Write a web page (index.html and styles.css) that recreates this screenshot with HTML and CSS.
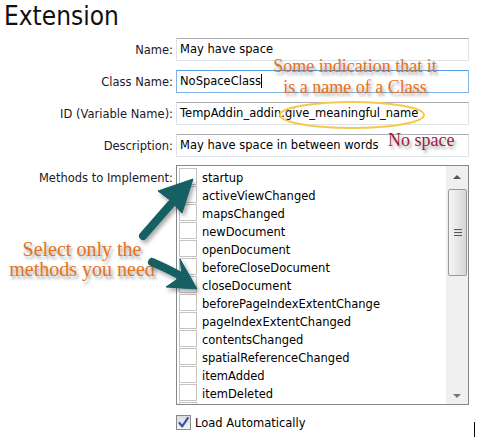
FILE: index.html
```html
<!DOCTYPE html>
<html lang="en">
<head>
<meta charset="utf-8">
<title>Extension</title>
<link rel="stylesheet" href="styles.css">
</head>
<body>
<div class="page">
  <h1 class="title">Extension</h1>

  <div class="form">
    <label class="label">Name:</label>
    <div class="field">May have space</div>

    <label class="label">Class Name:</label>
    <div class="field focused">NoSpaceClass<span class="caret"></span></div>

    <label class="label">ID (Variable Name):</label>
    <div class="field">TempAddin_addin.give_meaningful_name</div>

    <label class="label">Description:</label>
    <div class="field">May have space in between words</div>

    <label class="label top">Methods to Implement:</label>
    <div class="listbox">
      <ul class="methods">
        <li><span class="box"></span><span class="name">startup</span></li>
        <li><span class="box"></span><span class="name">activeViewChanged</span></li>
        <li><span class="box"></span><span class="name">mapsChanged</span></li>
        <li><span class="box"></span><span class="name">newDocument</span></li>
        <li><span class="box"></span><span class="name">openDocument</span></li>
        <li><span class="box"></span><span class="name">beforeCloseDocument</span></li>
        <li><span class="box"></span><span class="name">closeDocument</span></li>
        <li><span class="box"></span><span class="name">beforePageIndexExtentChange</span></li>
        <li><span class="box"></span><span class="name">pageIndexExtentChanged</span></li>
        <li><span class="box"></span><span class="name">contentsChanged</span></li>
        <li><span class="box"></span><span class="name">spatialReferenceChanged</span></li>
        <li><span class="box"></span><span class="name">itemAdded</span></li>
        <li><span class="box"></span><span class="name">itemDeleted</span></li>
        <li><span class="box"></span></li>
      </ul>
      <div class="scrollbar">
        <div class="arrow up"></div>
        <div class="track">
          <div class="thumb"><span class="grip"></span></div>
        </div>
        <div class="arrow down"></div>
      </div>
    </div>

    <span></span>
    <div class="auto">
      <span class="check">
        <svg width="11" height="11" viewBox="0 0 11 11"><path d="M1.5 6 L4.2 9.3 L9.8 1.2" fill="none" stroke="#3553a8" stroke-width="2.2" stroke-linejoin="round" stroke-linecap="round"/></svg>
      </span>
      Load Automatically
    </div>
  </div>

  <!-- callouts drawn over the form -->
  <div class="note class-note">Some indication that it<br>is a name of a Class</div>
  <div class="note space-note">No space</div>
  <div class="note select-note">Select only the<br>methods you need</div>

  <svg class="marks" width="494" height="437" viewBox="0 0 494 437">
    <defs>
      <filter id="shade" x="-30%" y="-30%" width="160%" height="160%">
        <feDropShadow dx="2" dy="3" stdDeviation="2" flood-color="#000" flood-opacity="0.35"/>
      </filter>
    </defs>
    <ellipse cx="352" cy="115" rx="72" ry="13" fill="none" stroke="#f6c94a" stroke-width="2"/>
    <g fill="#155e63" stroke="#155e63" filter="url(#shade)">
      <path d="M143 236 L171 204" stroke-width="8" stroke-linecap="round" fill="none"/>
      <path d="M193 179 L158 191 L170 200 L182 213 Z" stroke-width="1" stroke-linejoin="round"/>
      <path d="M152 262 Q166 268 181 276" stroke-width="8" stroke-linecap="round" fill="none"/>
      <path d="M197 289 L180 259 L182 276 L166 287 Z" stroke-width="1" stroke-linejoin="round"/>
    </g>
    <line x1="474.5" y1="422" x2="474.5" y2="437" stroke="#000" stroke-width="1"/>
  </svg>
</div>
</body>
</html>
```
FILE: styles.css
```css
html, body {
  margin: 0;
  padding: 0;
  background: #fff;
}

.page {
  position: relative;
  width: 494px;
  height: 437px;
  overflow: hidden;
  font-family: "DejaVu Sans", Tahoma, sans-serif;
  font-size: 11.5px;
  color: #000;
}

.title {
  margin: 0;
  padding: 0 0 0 4px;
  height: 38px;
  box-sizing: border-box;
  font-family: "DejaVu Sans Condensed", "DejaVu Sans", sans-serif;
  font-weight: normal;
  font-size: 26px;
  line-height: 32px;
  color: #111;
}

.form {
  display: grid;
  grid-template-columns: 173px 293px;
  column-gap: 3px;
  row-gap: 9px;
  align-items: center;
}

.label {
  text-align: right;
  white-space: nowrap;
  color: #1a1a28;
}

.label.top {
  align-self: start;
  padding-top: 5px;
}

.field {
  height: 23px;
  box-sizing: border-box;
  border: 1px solid #dde3ea;
  border-top-color: #abadb3;
  padding: 0 3px;
  line-height: 21px;
  white-space: nowrap;
  overflow: hidden;
}

.field.focused {
  border-color: #7eb4ea;
  border-top-color: #569de5;
}

.caret {
  display: inline-block;
  width: 1px;
  height: 14px;
  background: #000;
  vertical-align: -3px;
}

.listbox {
  display: flex;
  height: 240px;
  box-sizing: border-box;
  border: 1px solid #828790;
  overflow: hidden;
  margin-top: -1px;
}

.methods {
  flex: 1;
  list-style: none;
  margin: 0;
  padding: 2px 0 0 2px;
}

.methods li {
  display: flex;
  align-items: flex-start;
  height: 18px;
  gap: 5px;
  white-space: nowrap;
}

.name {
  line-height: 18px;
  padding-top: 1px;
}

.box {
  width: 18px;
  height: 17px;
  box-sizing: border-box;
  border: 1px solid #c4c4c4;
  background: #fff;
  flex: none;
}

.scrollbar {
  width: 21px;
  flex: none;
  display: flex;
  flex-direction: column;
  background: #f0f0f0;
  border-left: 1px solid #ececec;
}

.arrow {
  height: 22px;
  position: relative;
}

.arrow::before {
  content: "";
  position: absolute;
  left: 6px;
  width: 0;
  height: 0;
  border-left: 4px solid transparent;
  border-right: 4px solid transparent;
}

.arrow.up::before {
  top: 9px;
  border-bottom: 4px solid #555;
}

.arrow.down::before {
  top: 9px;
  border-top: 4px solid #777;
}

.arrow.down {
  height: 19px;
}

.track {
  flex: 1;
  padding: 1px 1px 0 1px;
}

.thumb {
  height: 87px;
  box-sizing: border-box;
  border: 1px solid #9a9a9a;
  border-radius: 2px;
  background: linear-gradient(to right, #f4f4f4, #e8e8e8 45%, #d6d6d6 100%);
  display: flex;
  align-items: center;
  justify-content: center;
}

.grip {
  width: 8px;
  height: 7px;
  background: repeating-linear-gradient(to bottom, #555 0 1px, transparent 1px 3px);
}

.auto {
  display: flex;
  align-items: center;
  gap: 4px;
  height: 17px;
}

.check {
  width: 15px;
  height: 15px;
  box-sizing: border-box;
  border: 1px solid #8a8a8a;
  background: linear-gradient(#dcdcdc, #f4f4f4);
  display: flex;
  align-items: center;
  justify-content: center;
}

.note {
  position: absolute;
  font-family: "Liberation Serif", "Times New Roman", serif;
  text-align: center;
  text-shadow: 2px 3px 3px rgba(0, 0, 0, 0.35);
  white-space: nowrap;
}

.class-note {
  left: 262px;
  top: 56px;
  width: 186px;
  font-size: 18px;
  line-height: 21px;
  color: #e5721d;
}

.space-note {
  left: 388px;
  top: 130px;
  font-size: 18px;
  line-height: 21px;
  color: #9b1d35;
}

.select-note {
  left: 4px;
  top: 239px;
  width: 156px;
  font-size: 20px;
  line-height: 20px;
  color: #e5721d;
}

.marks {
  position: absolute;
  left: 0;
  top: 0;
  pointer-events: none;
}
```
